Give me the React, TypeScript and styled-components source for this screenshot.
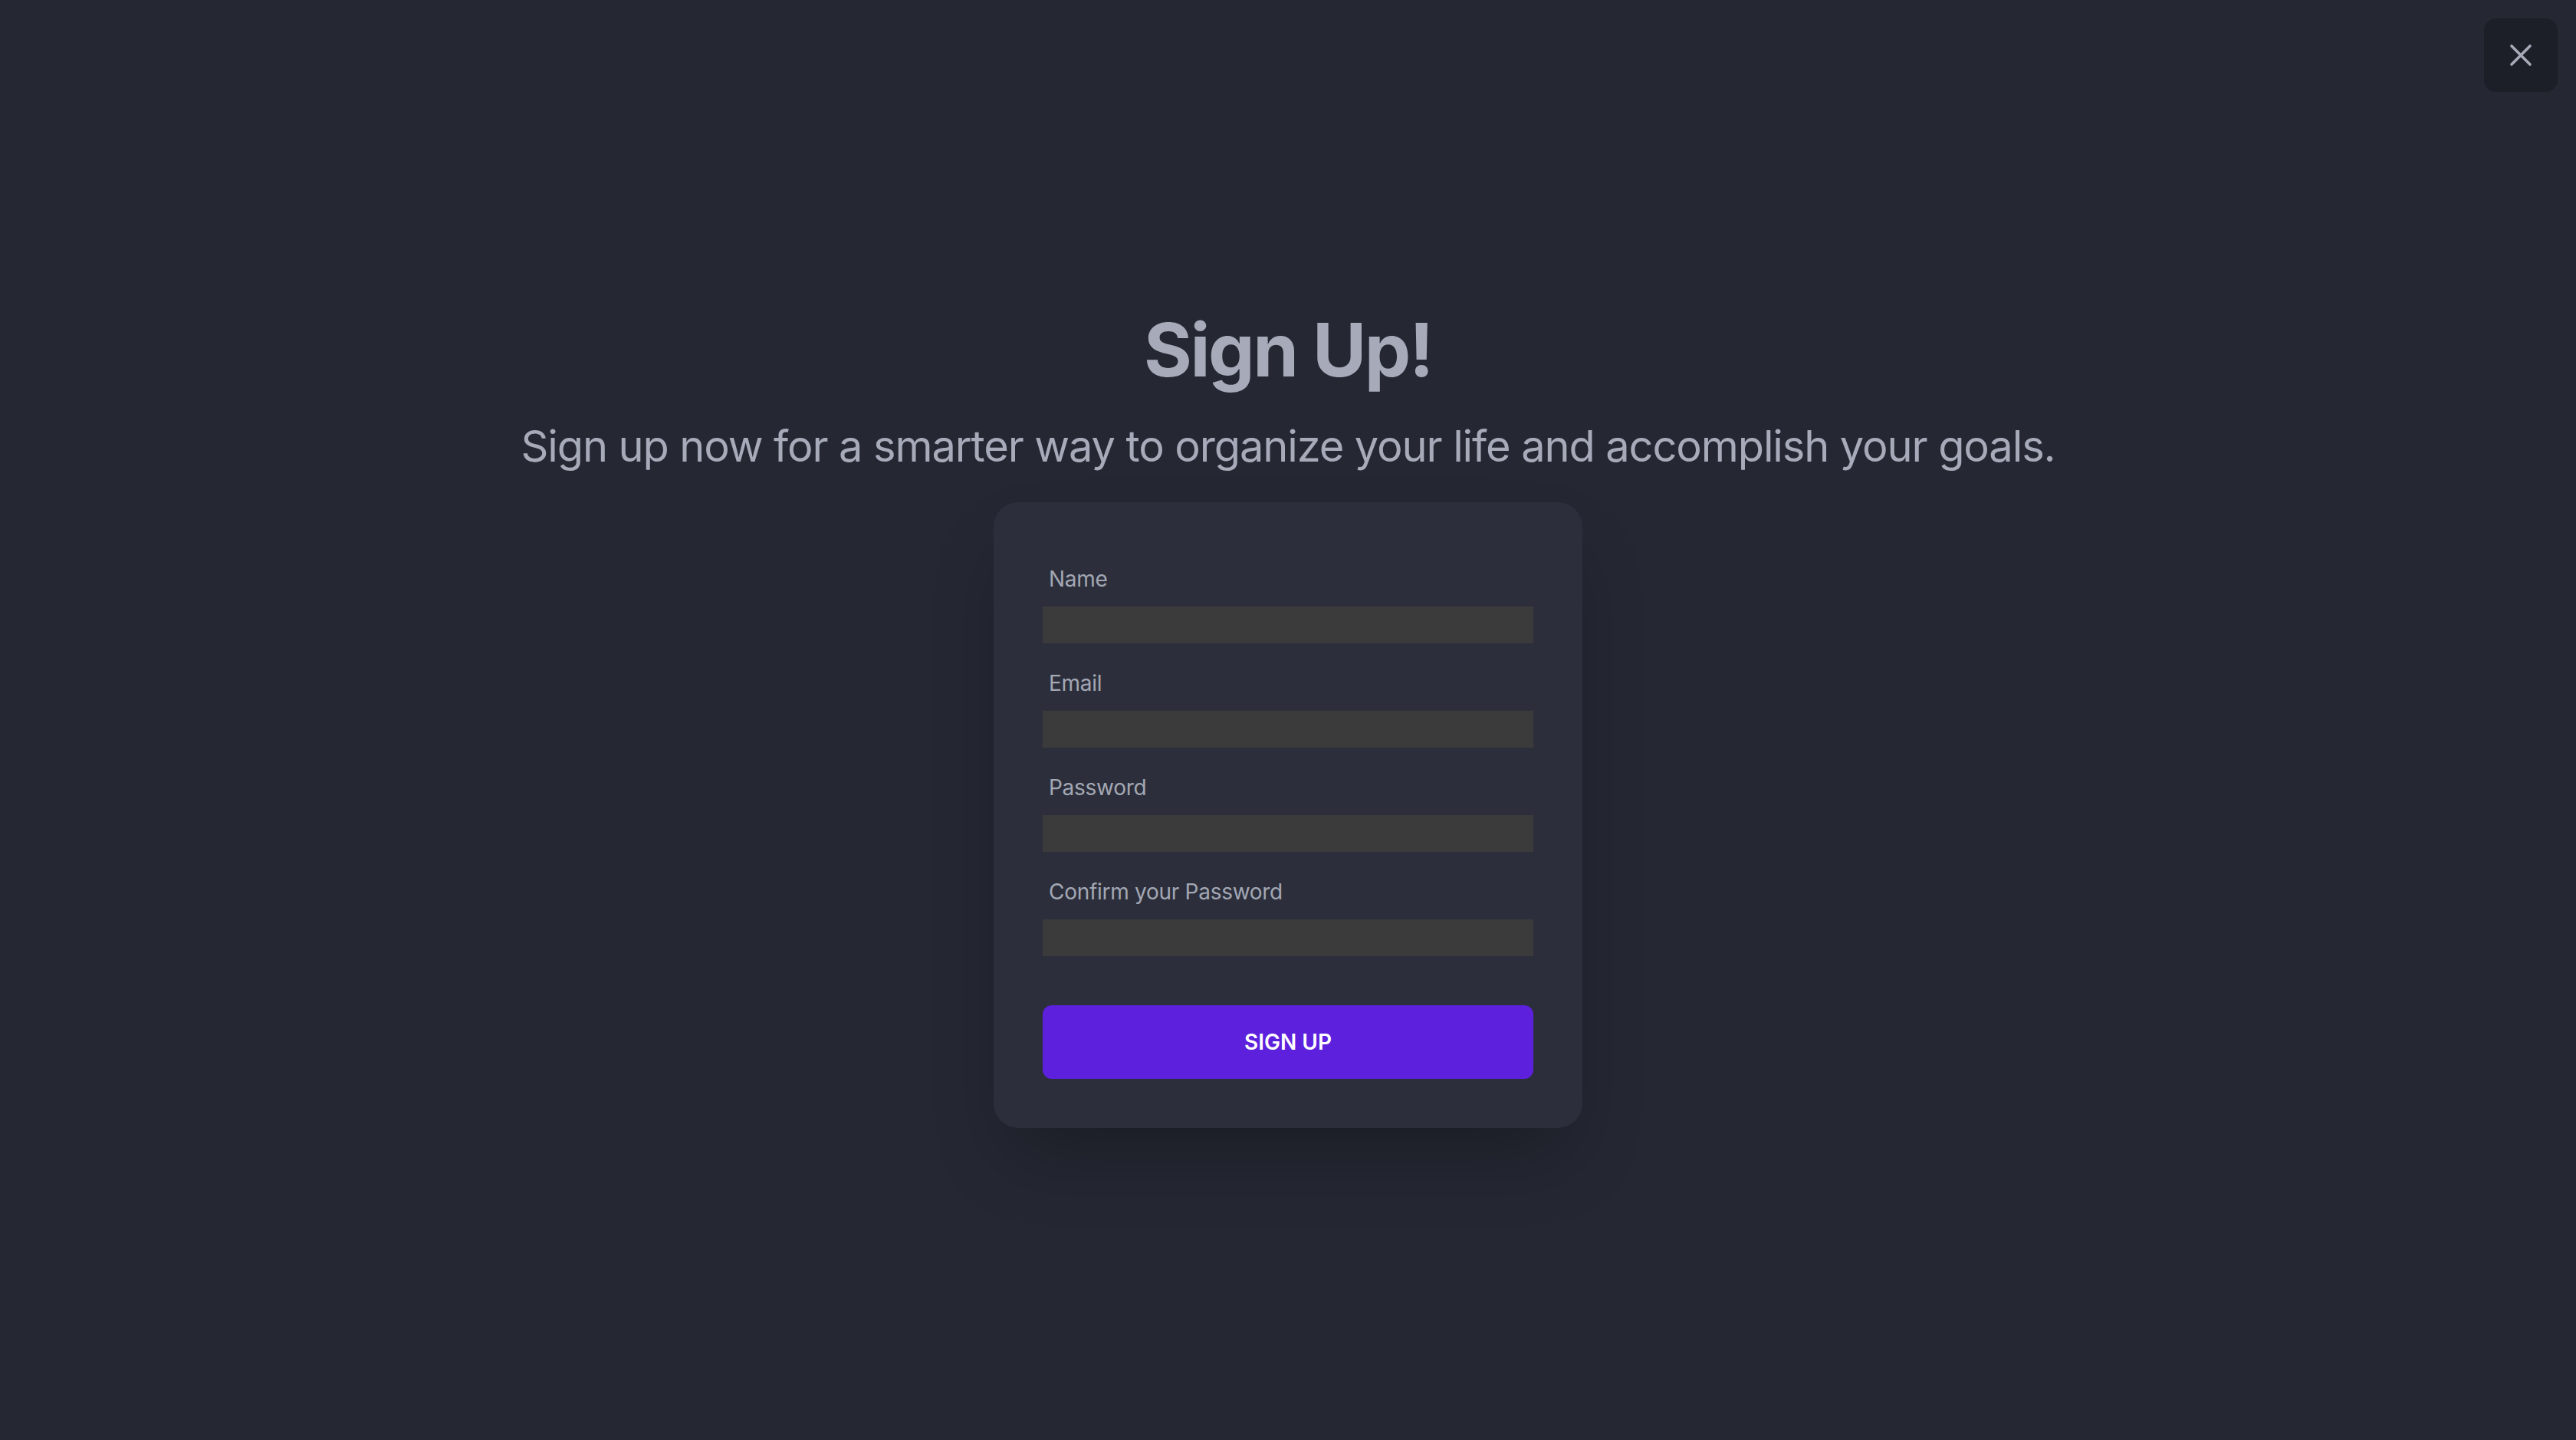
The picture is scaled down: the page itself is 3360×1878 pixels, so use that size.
import styled, { createGlobalStyle } from "styled-components";

const GlobalStyle = createGlobalStyle`
  * {
    box-sizing: border-box;
  }
  html,
  body {
    margin: 0;
    padding: 0;
    background: #252833;
    font-family: Inter, "Noto Sans", sans-serif;
  }
`;

const fields = [
  { id: "name", label: "Name", type: "text" },
  { id: "email", label: "Email", type: "email" },
  { id: "password", label: "Password", type: "password" },
  { id: "confirm", label: "Confirm your Password", type: "password" },
];

const App = () => {
  return (
    <>
      <GlobalStyle />
      <Style.Page>
        <Style.CloseButton aria-label="close">
          <svg width="32" height="32" viewBox="0 0 32 32" fill="none">
            <path
              d="M4 4L28 28M28 4L4 28"
              stroke="#a6aab9"
              strokeWidth="3.6"
              strokeLinecap="round"
            />
          </svg>
        </Style.CloseButton>
        <Style.Title>Sign Up!</Style.Title>
        <Style.Subtitle>
          Sign up now for a smarter way to organize your life and accomplish
          your goals.
        </Style.Subtitle>
        <Style.Card onSubmit={(e) => e.preventDefault()}>
          {fields.map((f) => (
            <Style.Field key={f.id}>
              <Style.Label htmlFor={f.id}>{f.label}</Style.Label>
              <Style.Input id={f.id} type={f.type} />
            </Style.Field>
          ))}
          <Style.SubmitButton type="submit">Sign Up</Style.SubmitButton>
        </Style.Card>
      </Style.Page>
    </>
  );
};

export default App;

const Style = {
  Page: styled.main`
    position: relative;
    min-height: 100vh;
    display: flex;
    flex-direction: column;
    align-items: center;
    justify-content: center;
    color: #a6aab9;
  `,
  CloseButton: styled.button`
    position: absolute;
    top: 24px;
    right: 24px;
    width: 96px;
    height: 96px;
    display: flex;
    align-items: center;
    justify-content: center;
    border: none;
    border-radius: 16px;
    background: #1c1f27;
    cursor: pointer;
  `,
  Title: styled.h1`
    margin: 0 0 42px;
    font-size: 96px;
    line-height: 1;
    font-weight: 700;
    letter-spacing: -0.025em;
    color: #a6aab9;
  `,
  Subtitle: styled.p`
    margin: 0 0 37px;
    font-size: 56px;
    line-height: 72px;
    font-weight: 400;
    letter-spacing: -0.02em;
    color: #a6aab9;
  `,
  Card: styled.form`
    width: 768px;
    padding: 80px 64px 64px;
    display: flex;
    flex-direction: column;
    background: #2c2f3b;
    border-radius: 32px;
    box-shadow: 0 50px 100px -24px rgba(0, 0, 0, 0.3);
  `,
  Field: styled.div`
    display: flex;
    flex-direction: column;
    margin-bottom: 32px;
  `,
  Label: styled.label`
    padding-left: 8px;
    margin-bottom: 16px;
    font-size: 28px;
    line-height: 40px;
    letter-spacing: -0.01em;
    color: #a3a7b4;
  `,
  Input: styled.input`
    height: 48px;
    width: 100%;
    border: none;
    border-radius: 0;
    outline: none;
    padding: 0 16px;
    background: #3b3b3b;
    color: #e5e7eb;
    font-family: Inter, sans-serif;
    font-size: 28px;
  `,
  SubmitButton: styled.button`
    margin-top: 32px;
    height: 96px;
    width: 100%;
    border: none;
    border-radius: 12px;
    background: #5d20dd;
    color: #ffffff;
    font-family: Inter, sans-serif;
    font-size: 28px;
    font-weight: 600;
    text-transform: uppercase;
    cursor: pointer;
  `,
};
